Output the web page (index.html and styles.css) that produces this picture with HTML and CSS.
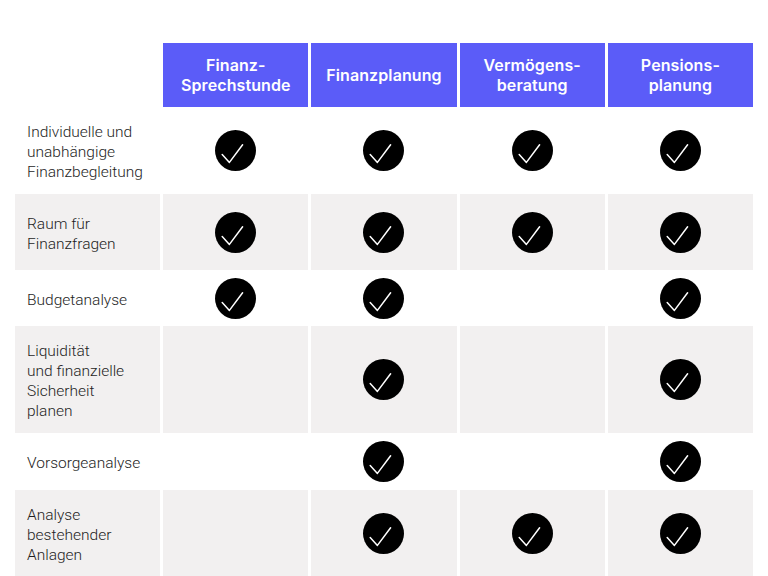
FILE: index.html
```html
<!DOCTYPE html>
<html lang="de">
<head>
<meta charset="utf-8">
<link rel="stylesheet" href="styles.css">
</head>
<body>
<svg width="0" height="0" class="defs">
  <symbol id="chk" viewBox="0 0 41 41">
    <circle cx="20.5" cy="20.5" r="20.5" fill="#000"/>
    <path d="M7.2 24.6 L14.4 32.4 L27.6 14.8" fill="none" stroke="#fff" stroke-width="1.5" stroke-linecap="round" stroke-linejoin="round"/>
  </symbol>
</svg>
<div class="table">
  <div class="head empty"></div>
  <div class="head">Finanz-<br>Sprechstunde</div>
  <div class="head">Finanzplanung</div>
  <div class="head">Vermögens-<br>beratung</div>
  <div class="head">Pensions-<br>planung</div>

  <div class="label">Individuelle und<br>unabhängige<br>Finanzbegleitung</div>
  <div class="cell"><svg class="check"><use href="#chk"/></svg></div>
  <div class="cell"><svg class="check"><use href="#chk"/></svg></div>
  <div class="cell"><svg class="check"><use href="#chk"/></svg></div>
  <div class="cell"><svg class="check"><use href="#chk"/></svg></div>

  <div class="label alt">Raum für<br>Finanzfragen</div>
  <div class="cell alt"><svg class="check"><use href="#chk"/></svg></div>
  <div class="cell alt"><svg class="check"><use href="#chk"/></svg></div>
  <div class="cell alt"><svg class="check"><use href="#chk"/></svg></div>
  <div class="cell alt"><svg class="check"><use href="#chk"/></svg></div>

  <div class="label">Budgetanalyse</div>
  <div class="cell"><svg class="check"><use href="#chk"/></svg></div>
  <div class="cell"><svg class="check"><use href="#chk"/></svg></div>
  <div class="cell"></div>
  <div class="cell"><svg class="check"><use href="#chk"/></svg></div>

  <div class="label alt">Liquidität<br>und finanzielle<br>Sicherheit<br>planen</div>
  <div class="cell alt"></div>
  <div class="cell alt"><svg class="check"><use href="#chk"/></svg></div>
  <div class="cell alt"></div>
  <div class="cell alt"><svg class="check"><use href="#chk"/></svg></div>

  <div class="label">Vorsorgeanalyse</div>
  <div class="cell"></div>
  <div class="cell"><svg class="check"><use href="#chk"/></svg></div>
  <div class="cell"></div>
  <div class="cell"><svg class="check"><use href="#chk"/></svg></div>

  <div class="label alt">Analyse<br>bestehender<br>Anlagen</div>
  <div class="cell alt"></div>
  <div class="cell alt"><svg class="check"><use href="#chk"/></svg></div>
  <div class="cell alt"><svg class="check"><use href="#chk"/></svg></div>
  <div class="cell alt"><svg class="check"><use href="#chk"/></svg></div>
</div>
</body>
</html>
```

FILE: styles.css
```css
html, body {
  margin: 0;
  padding: 0;
  background: #fff;
}
body {
  font-family: Inter, "Noto Sans", sans-serif;
  color: #222;
  overflow: hidden;
}
.defs {
  position: absolute;
  width: 0;
  height: 0;
}
.table {
  display: grid;
  grid-template-columns: repeat(5, 1fr);
  grid-template-rows: 64px 81px 76px 50px 107px 51px 86px;
  gap: 3px;
  padding: 43px 15px 0;
}
.head {
  background: #5b5cf8;
  color: #fff;
  font-weight: 600;
  font-size: 16px;
  line-height: 20px;
  display: flex;
  align-items: center;
  justify-content: center;
  text-align: center;
  letter-spacing: 0.1px;
}
.head.empty {
  background: transparent;
}
.label {
  font-family: Roboto, "Noto Sans", sans-serif;
  font-weight: 300;
  font-size: 15.5px;
  line-height: 20px;
  color: #1e1e1e;
  padding: 3px 0 0 12px;
  display: flex;
  align-items: center;
}
.cell {
  display: flex;
  align-items: center;
  justify-content: center;
}
.alt {
  background: #f2f0f0;
}
.check {
  width: 41px;
  height: 41px;
}
```
